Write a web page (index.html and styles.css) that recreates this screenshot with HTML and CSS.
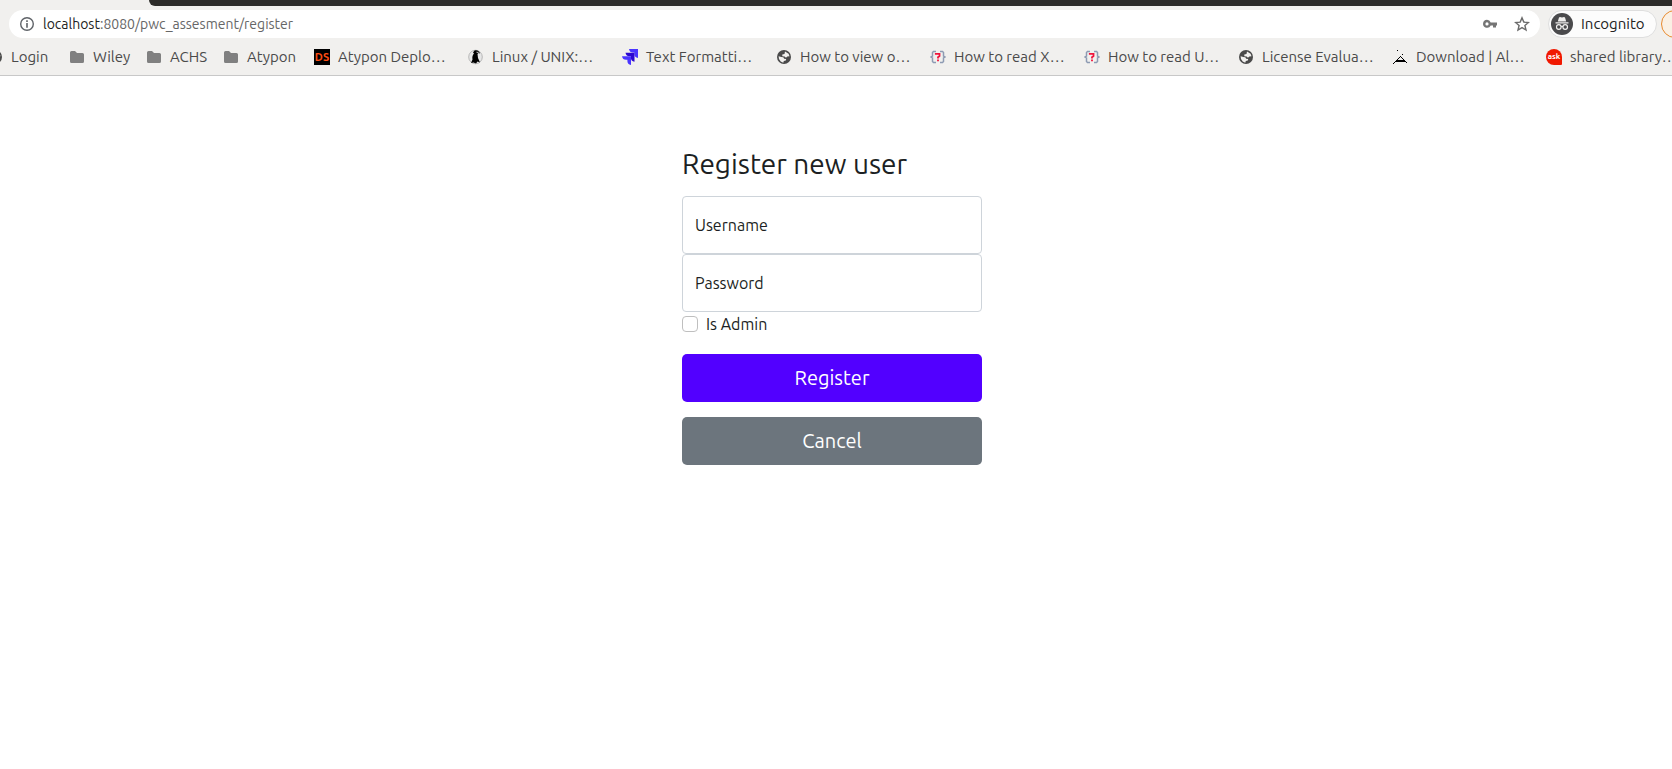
FILE: index.html
```html
<!DOCTYPE html>
<html lang="en">
<head>
<meta charset="utf-8">
<title>Register</title>
<link rel="stylesheet" href="styles.css">
</head>
<body>
<svg class="defs" aria-hidden="true">
  <symbol id="folder" viewBox="0 0 16 16"><path fill="#808080" d="M2.500 2H6l2 2h5.500a1.500 1.500 0 0 1 1.500 1.500v7a1.500 1.500 0 0 1-1.500 1.500h-11A1.500 1.500 0 0 1 1 12.500v-9A1.500 1.500 0 0 1 2.500 2z"/></symbol>
  <symbol id="globe" viewBox="0 0 16 16"><circle cx="8" cy="8" r="7" fill="#4a4a4a"/><path fill="#f1f0ee" d="M9 2.600l3.600 2.200.9 2.400-2.200.3-1.300 1.200-1.400-1.200-2.300-.3V5.600L8.500 5zM2.600 7.200l2.700.9 2 .2.900 1.500 2 .3-.4 1.500-2 .5-.5 1.700-2.600-1.400-1.700-2.300z"/></symbol>
  <symbol id="braces" viewBox="0 0 16 16"><path fill="none" stroke="#8e9bb3" stroke-width="1.500" d="M6 2.500H3.500L2.500 3.500V7L1 8l1.500 1v3.500l1 1H6M10 2.500h2.500l1 1V7L15 8l-1.500 1v3.500l-1 1H10"/><path fill="none" stroke="#f0143c" stroke-width="1.800" d="M5.800 5.800V4.900H9.500V7L8 8.200V9.600M8 10.600v1.700"/></symbol>
</svg>
<header class="browser">
  <div class="tabs"></div>
  <div class="toolbar">
    <div class="address">
      <svg class="icon" viewBox="0 0 16 16"><circle cx="8" cy="8" r="6.300" fill="none" stroke="#5f6368" stroke-width="1.400"/><path fill="#5f6368" d="M7.200 4.300h1.600v1.600H7.200zM7.200 7h1.600v4.700H7.200z"/></svg>
      <div class="url"><span class="host">localhost</span>:8080/pwc_assesment/register</div>
      <svg class="icon" viewBox="0 0 16 16"><path fill="#757575" fill-rule="evenodd" d="M5 3.800a4 4 0 0 1 3.700 2.600H15v3h-1v2h-3v-2H8.700A4 4 0 1 1 5 3.800zM5 6.300a1.600 1.600 0 1 0 0 3.200 1.600 1.600 0 0 0 0-3.200z"/></svg>
      <svg class="icon" viewBox="0 0 16 16"><path fill="none" stroke="#6b6b6b" stroke-width="1.400" d="M8 1.900l1.800 4.200 4.600.4-3.500 3 1.100 4.500-4-2.400-4 2.400 1.100-4.500-3.500-3 4.600-.4z"/></svg>
    </div>
    <div class="incognito">
      <svg class="spy" viewBox="0 0 22 22"><circle cx="11" cy="11" r="11" fill="#4a4a4c"/><path fill="#f1f0ee" d="M8 4.500l1-.5 2 .5 2-.5 1 .5 1.200 4H6.800zM4.500 9.300h13v1.300h-13z"/><g fill="none" stroke="#f1f0ee" stroke-width="1.200"><circle cx="7.800" cy="14" r="2.300"/><circle cx="14.200" cy="14" r="2.300"/><path d="M10 13.700q1-.7 2 0"/></g></svg>
      <span>Incognito</span>
    </div>
    <div class="update"></div>
  </div>
  <nav class="bookmarks">
    <a class="mark login" href="#"><svg class="icon"><use href="#globe"/></svg>Login</a>
    <a class="mark folder" href="#"><svg class="icon"><use href="#folder"/></svg>Wiley</a>
    <a class="mark folder" href="#"><svg class="icon"><use href="#folder"/></svg>ACHS</a>
    <a class="mark wide" href="#"><svg class="icon"><use href="#folder"/></svg>Atypon</a>
    <a class="mark" href="#"><span class="ds">DS</span>Atypon Deplo…</a>
    <a class="mark" href="#"><svg class="icon" viewBox="0 0 16 16"><circle cx="7.500" cy="8" r="6.800" fill="#e6e6e6" stroke="#aaa" stroke-width=".8"/><path d="M6.500 1.500c2.500-1 5 .5 5.500 3L10.500 4 9.500 5l.5 4 2 4.500-2.500-1L8 14.500l-2.500-1-2.500.5 1.500-3.500C4 8 4.500 6 6 4.500L5 3.500z"/><path fill="none" stroke="#fff" stroke-width=".8" d="M8.500 3.200l2 .3"/></svg>Linux / UNIX:…</a>
    <a class="mark" href="#"><svg class="icon" viewBox="0 0 16 16"><path fill="#4a35ff" d="M7 0h9v9q-3.600-.6-3.600-4V3.600H11Q7.600 3.600 7 0z"/><path fill="#2c08d0" d="M3.500 3.700h9v9q-3.600-.6-3.600-4V7.300H7.500q-3.400 0-4-3.600z"/><path fill="#4a35ff" d="M0 7.300h9v8.700q-3.600-.6-3.600-4v-1.200H4Q.6 10.800 0 7.300z"/></svg>Text Formatti…</a>
    <a class="mark" href="#"><svg class="icon"><use href="#globe"/></svg>How to view o…</a>
    <a class="mark" href="#"><svg class="icon"><use href="#braces"/></svg>How to read X…</a>
    <a class="mark" href="#"><svg class="icon"><use href="#braces"/></svg>How to read U…</a>
    <a class="mark" href="#"><svg class="icon"><use href="#globe"/></svg>License Evalua…</a>
    <a class="mark" href="#"><svg class="icon" viewBox="0 0 16 16" shape-rendering="crispEdges"><path d="M5 1h1v1H5zM10 5h1v1h-1zM8 7h1v1H8zM7 8h1v1H7zM9 8h1v1H9zM6 9h1v1H6zM10 9h1v1h-1zM5 10h1v1H5zM11 10h1v1h-1zM4 11h9v1H4zM3 12h11v1H3zM2 13h1v1H2zM14 13h1v1h-1zM1 14h1v1H1z"/></svg>Download | Al…</a>
    <a class="mark" href="#"><span class="ask">ask</span>shared library…</a>
  </nav>
</header>
<main class="page">
  <form class="register">
    <h1 class="title">Register new user</h1>
    <div class="field"><input class="input" id="username" type="text"><label class="label" for="username">Username</label></div>
    <div class="field"><input class="input" id="password" type="password"><label class="label" for="password">Password</label></div>
    <div class="check"><input class="box" id="admin" type="checkbox"><label for="admin">Is Admin</label></div>
    <button class="button primary" type="submit">Register</button>
    <button class="button secondary" type="button">Cancel</button>
  </form>
</main>
</body>
</html>
```
FILE: styles.css
```css
* { box-sizing: border-box; }

body {
  margin: 0;
  background: #fff;
  color: #1c1f23;
  font-family: Ubuntu, "Noto Sans", sans-serif;
  font-size: 16px;
  line-height: 24px;
}

.defs { display: none; }
.icon { flex: none; width: 16px; height: 16px; }

.browser {
  overflow: hidden;
  background: #f1f0ee;
  border-bottom: 1px solid #c8c8c8;
}

.tabs {
  height: 6px;
  margin-left: 149px;
  background: #2c2b29;
  border-bottom-left-radius: 8px;
}

.toolbar {
  display: flex;
  gap: 8px;
  margin-right: -29px;
  padding: 4px 0 0 9px;
}

.address {
  display: flex;
  flex: 1;
  align-items: center;
  gap: 16px;
  height: 28px;
  padding: 0 10px;
  border-radius: 14px;
  background: #fff;
}

.url { flex: 1; margin-left: -8px; color: #666; font-size: 14px; }
.host { color: #222; }

.incognito {
  display: flex;
  align-items: center;
  gap: 8px;
  width: 109px;
  height: 28px;
  padding-left: 2px;
  border: 1px solid #dedede;
  border-radius: 14px;
  background: #fcfcfc;
  color: #222;
  font-size: 15px;
}

.spy { flex: none; width: 22px; height: 22px; }

.update {
  width: 40px;
  height: 28px;
  margin-left: -4px;
  border: 1px solid #e88a2e;
  border-radius: 14px;
  background: #faf0e4;
}

.bookmarks {
  display: flex;
  height: 37px;
  margin-left: -13px;
}

.mark {
  display: flex;
  flex: none;
  align-items: center;
  gap: 8px;
  width: 154px;
  color: #4a4a4a;
  font-size: 15px;
  text-decoration: none;
  white-space: nowrap;
}

.login { width: 82px; }
.folder { width: 77px; }
.wide { width: 91px; }

.ds, .ask {
  display: flex;
  flex: none;
  align-items: center;
  justify-content: center;
  width: 16px;
  height: 16px;
  font-weight: bold;
  line-height: 16px;
}

.ds { background: #000; color: #ff4d12; font-size: 11px; }
.ask { border-radius: 8px 8px 1px 8px; background: #f01800; color: #fff; font-size: 8px; }

.page {
  display: flex;
  justify-content: center;
  padding: 71px 8px 40px 0;
}

.register { display: flex; flex-direction: column; width: 300px; }

.title {
  margin: 0 0 16px;
  font-size: 28px;
  font-weight: 400;
  line-height: 33px;
}

.field { position: relative; }

.input {
  display: block;
  width: 100%;
  height: 58px;
  padding: 16px 12px;
  border: 1px solid #ced4da;
  border-radius: 4px;
  background: #fff;
  font: inherit;
}

.label { position: absolute; top: 17px; left: 13px; }

.check {
  display: flex;
  align-items: center;
  gap: 8px;
  margin-bottom: 18px;
}

.box {
  width: 16px;
  height: 16px;
  margin: 0;
  border: 1px solid #bfbfbf;
  border-radius: 4px;
  background: #fff;
  appearance: none;
}

.box:checked { background: #5200ff; }

.button {
  height: 48px;
  border: 0;
  border-radius: 5px;
  color: #fff;
  font: inherit;
  font-size: 20px;
}

.primary { margin-bottom: 15px; background: #5200ff; }
.secondary { background: #6c757d; }
```
